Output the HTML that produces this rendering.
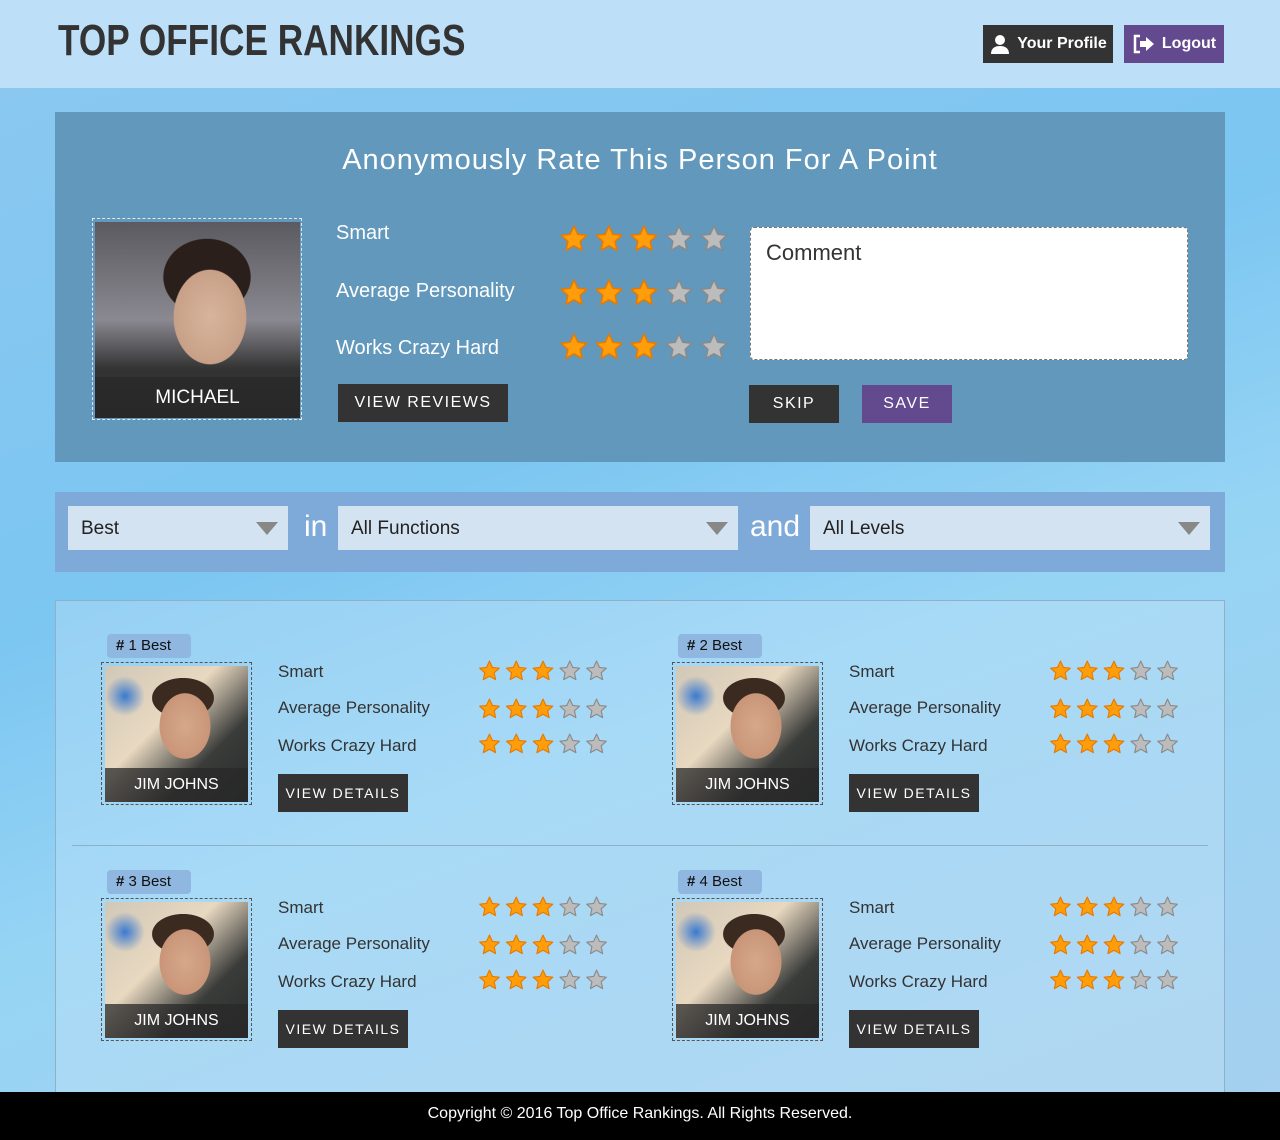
<!DOCTYPE html>
<html><head><meta charset="utf-8"><style>
*{margin:0;padding:0;box-sizing:border-box}
body{width:1280px;height:1140px;position:relative;overflow:hidden;font-family:"Liberation Sans",sans-serif;background:linear-gradient(160deg,#8cc8f0 0%,#7cc6f2 40%,#96d4f4 60%,#a6cfee 100%)}
.hdr{position:absolute;left:0;top:0;width:1280px;height:88px;background:#bde0f8}
.title{position:absolute;left:58px;top:16px;font:bold 44px "Liberation Sans Narrow","Liberation Sans",sans-serif;color:#333;white-space:nowrap;transform:scaleX(.8);transform-origin:left}
.btn{position:absolute;color:#fff;font-weight:bold;font-size:16px;display:flex;align-items:center;justify-content:center;gap:6px}
.dk{background:#333}.pu{background:#634a8e}
.abs{position:absolute}
.panel{position:absolute;left:55px;top:112px;width:1170px;height:350px;background:#6198bb}
.h2{position:absolute;left:0;width:1170px;top:32px;text-align:center;color:#fff;font-size:29px;letter-spacing:1px}
.lbl{position:absolute;color:#fff;font-size:20px;white-space:nowrap}
.sbtn{position:absolute;color:#fff;font-size:16px;letter-spacing:1.5px;display:flex;align-items:center;justify-content:center;white-space:nowrap}
.photo{position:absolute;overflow:hidden}
.name{position:absolute;left:0;bottom:0;width:100%;background:rgba(40,40,40,.75);color:#fff;text-align:center}
.filter{position:absolute;left:55px;top:492px;width:1170px;height:80px;background:#7eaad9}
.sel{position:absolute;top:14px;height:44px;background:#d4e3f1;font-size:19px;color:#222;padding:12px 0 0 13px}
.sel:after{content:"";position:absolute;right:10px;top:16px;border-left:11px solid transparent;border-right:11px solid transparent;border-top:13px solid #888}
.conj{position:absolute;top:18px;color:#fff;font-size:30px}
.list{position:absolute;left:55px;top:600px;width:1170px;height:500px;background:rgba(200,230,250,.35);border:1px solid #8fb0c8}
.badge{position:absolute;background:#8fb7e0;border-radius:4px;font-size:15px;color:#111;padding:3px 0 0 9px;height:24px;width:84px;white-space:nowrap}
.l2{position:absolute;color:#333;font-size:17px;white-space:nowrap}
.foot{position:absolute;left:0;top:1092px;width:1280px;height:48px;background:#000;color:#fff;font-size:16px;text-align:center;line-height:44px}
.dash{position:absolute;border:1px dashed rgba(255,255,255,.8)}
.pd{border:1px dashed #555}
</style></head><body>
<svg width="0" height="0" style="position:absolute"><defs>
<symbol id="so" viewBox="0 0 30 30"><path d="M15 2l3.8 8.3 9 1-6.7 6.1 1.9 8.9L15 21.8 7 26.3l1.9-8.9L2.2 11.3l9-1z" fill="#ff9d0a" stroke="#e67a00" stroke-width="1.5" stroke-linejoin="round"/></symbol>
<symbol id="sg" viewBox="0 0 30 30"><path d="M15 2l3.8 8.3 9 1-6.7 6.1 1.9 8.9L15 21.8 7 26.3l1.9-8.9L2.2 11.3l9-1z" fill="#bcbcbc" stroke="#8a8a8a" stroke-width="1.5" stroke-linejoin="round"/></symbol>
<symbol id="r" viewBox="0 0 170 30"><use href="#so" x="0" width="30" height="30"/><use href="#so" x="35" width="30" height="30"/><use href="#so" x="70" width="30" height="30"/><use href="#sg" x="105" width="30" height="30"/><use href="#sg" x="140" width="30" height="30"/></symbol>
</defs></svg>

<div class="hdr"></div>
<div class="title">TOP OFFICE RANKINGS</div>
<div class="btn dk" style="left:983px;top:25px;width:130px;height:38px"><svg width="22" height="20" viewBox="0 0 22 20"><circle cx="11" cy="6" r="5" fill="#fff"/><path d="M2 20c0-6 4-8 9-8s9 2 9 8z" fill="#fff"/></svg>Your Profile</div>
<div class="btn pu" style="left:1124px;top:25px;width:100px;height:38px"><svg width="24" height="20" viewBox="0 0 24 20"><path d="M8 2H3v16h5" fill="none" stroke="#fff" stroke-width="2.5"/><path d="M8 7h6V3l8 7-8 7v-4H8z" fill="#fff"/></svg>Logout</div>

<div class="panel">
<div class="h2">Anonymously Rate This Person For A Point</div>
<div class="photo" style="left:40px;top:110px;width:205px;height:196px;background:radial-gradient(ellipse 40px 52px at 115px 95px,#d8b49c 0,#c8a088 90%,transparent 92%),radial-gradient(ellipse 48px 42px at 112px 55px,#2a1f1a 0,#2a1f1a 90%,transparent 92%),linear-gradient(180deg,#5a5a60,#8a8890 50%,#333 75%,#2a2a2e)">
<div class="name" style="height:41px;font-size:19px;line-height:41px">MICHAEL</div></div>
<div class="dash" style="left:37px;top:106px;width:210px;height:202px"></div>
<div class="lbl" style="left:281px;top:110px">Smart</div>
<div class="lbl" style="left:281px;top:168px">Average Personality</div>
<div class="lbl" style="left:281px;top:225px">Works Crazy Hard</div>
<svg class="abs" style="left:504px;top:112px" width="170" height="30"><use href="#r"/></svg>
<svg class="abs" style="left:504px;top:166px" width="170" height="30"><use href="#r"/></svg>
<svg class="abs" style="left:504px;top:220px" width="170" height="30"><use href="#r"/></svg>
<div class="sbtn dk" style="left:283px;top:272px;width:170px;height:38px">VIEW REVIEWS</div>
<div class="abs" style="left:695px;top:115px;width:438px;height:133px;background:#fff;border:1px dashed #777;border-radius:4px;font-size:22px;color:#333;padding:12px 15px">Comment</div>
<div class="sbtn dk" style="left:694px;top:273px;width:90px;height:38px">SKIP</div>
<div class="sbtn pu" style="left:807px;top:273px;width:90px;height:38px">SAVE</div>
</div>

<div class="filter">
<div class="sel" style="left:13px;width:220px">Best</div>
<div class="conj" style="left:249px">in</div>
<div class="sel" style="left:283px;width:400px">All Functions</div>
<div class="conj" style="left:695px">and</div>
<div class="sel" style="left:755px;width:400px">All Levels</div>
</div>

<div class="list">
<div class="abs" style="left:16px;top:244px;width:1136px;height:1px;background:#8fb0c8"></div>
</div>

<div class="abs" style="left:0;top:0">
<div class="badge" style="left:107px;top:634px"><b>#</b> 1 Best</div>
<div class="photo" style="left:105px;top:666px;width:143px;height:136px;background:radial-gradient(ellipse 28px 36px at 80px 60px,#d6a88a 0,#c99578 90%,transparent 92%),radial-gradient(ellipse 34px 22px at 78px 32px,#3a2a20 0,#3a2a20 90%,transparent 92%),radial-gradient(circle at 20px 30px,#3a7ad0 0,transparent 20px),linear-gradient(135deg,#d0c8b8,#e8d8c0 40%,#3a3c3a 70%,#2a2c2c)"><div class="name" style="height:34px;font-size:16px;line-height:34px">JIM JOHNS</div></div>
<div class="abs pd" style="left:101px;top:662px;width:151px;height:143px"></div>
<div class="l2" style="left:278px;top:662px">Smart</div><div class="l2" style="left:278px;top:698px">Average Personality</div><div class="l2" style="left:278px;top:736px">Works Crazy Hard</div>
<svg class="abs" style="left:478px;top:659px" width="130" height="24" viewBox="0 0 170 30"><use href="#r"/></svg>
<svg class="abs" style="left:478px;top:697px" width="130" height="24" viewBox="0 0 170 30"><use href="#r"/></svg>
<svg class="abs" style="left:478px;top:732px" width="130" height="24" viewBox="0 0 170 30"><use href="#r"/></svg>
<div class="sbtn dk" style="left:278px;top:774px;width:130px;height:38px;font-size:14px">VIEW DETAILS</div>

<div class="badge" style="left:678px;top:634px"><b>#</b> 2 Best</div>
<div class="photo" style="left:676px;top:666px;width:143px;height:136px;background:radial-gradient(ellipse 28px 36px at 80px 60px,#d6a88a 0,#c99578 90%,transparent 92%),radial-gradient(ellipse 34px 22px at 78px 32px,#3a2a20 0,#3a2a20 90%,transparent 92%),radial-gradient(circle at 20px 30px,#3a7ad0 0,transparent 20px),linear-gradient(135deg,#d0c8b8,#e8d8c0 40%,#3a3c3a 70%,#2a2c2c)"><div class="name" style="height:34px;font-size:16px;line-height:34px">JIM JOHNS</div></div>
<div class="abs pd" style="left:672px;top:662px;width:151px;height:143px"></div>
<div class="l2" style="left:849px;top:662px">Smart</div><div class="l2" style="left:849px;top:698px">Average Personality</div><div class="l2" style="left:849px;top:736px">Works Crazy Hard</div>
<svg class="abs" style="left:1049px;top:659px" width="130" height="24" viewBox="0 0 170 30"><use href="#r"/></svg>
<svg class="abs" style="left:1049px;top:697px" width="130" height="24" viewBox="0 0 170 30"><use href="#r"/></svg>
<svg class="abs" style="left:1049px;top:732px" width="130" height="24" viewBox="0 0 170 30"><use href="#r"/></svg>
<div class="sbtn dk" style="left:849px;top:774px;width:130px;height:38px;font-size:14px">VIEW DETAILS</div>

<div class="badge" style="left:107px;top:870px"><b>#</b> 3 Best</div>
<div class="photo" style="left:105px;top:902px;width:143px;height:136px;background:radial-gradient(ellipse 28px 36px at 80px 60px,#d6a88a 0,#c99578 90%,transparent 92%),radial-gradient(ellipse 34px 22px at 78px 32px,#3a2a20 0,#3a2a20 90%,transparent 92%),radial-gradient(circle at 20px 30px,#3a7ad0 0,transparent 20px),linear-gradient(135deg,#d0c8b8,#e8d8c0 40%,#3a3c3a 70%,#2a2c2c)"><div class="name" style="height:34px;font-size:16px;line-height:34px">JIM JOHNS</div></div>
<div class="abs pd" style="left:101px;top:898px;width:151px;height:143px"></div>
<div class="l2" style="left:278px;top:898px">Smart</div><div class="l2" style="left:278px;top:934px">Average Personality</div><div class="l2" style="left:278px;top:972px">Works Crazy Hard</div>
<svg class="abs" style="left:478px;top:895px" width="130" height="24" viewBox="0 0 170 30"><use href="#r"/></svg>
<svg class="abs" style="left:478px;top:933px" width="130" height="24" viewBox="0 0 170 30"><use href="#r"/></svg>
<svg class="abs" style="left:478px;top:968px" width="130" height="24" viewBox="0 0 170 30"><use href="#r"/></svg>
<div class="sbtn dk" style="left:278px;top:1010px;width:130px;height:38px;font-size:14px">VIEW DETAILS</div>

<div class="badge" style="left:678px;top:870px"><b>#</b> 4 Best</div>
<div class="photo" style="left:676px;top:902px;width:143px;height:136px;background:radial-gradient(ellipse 28px 36px at 80px 60px,#d6a88a 0,#c99578 90%,transparent 92%),radial-gradient(ellipse 34px 22px at 78px 32px,#3a2a20 0,#3a2a20 90%,transparent 92%),radial-gradient(circle at 20px 30px,#3a7ad0 0,transparent 20px),linear-gradient(135deg,#d0c8b8,#e8d8c0 40%,#3a3c3a 70%,#2a2c2c)"><div class="name" style="height:34px;font-size:16px;line-height:34px">JIM JOHNS</div></div>
<div class="abs pd" style="left:672px;top:898px;width:151px;height:143px"></div>
<div class="l2" style="left:849px;top:898px">Smart</div><div class="l2" style="left:849px;top:934px">Average Personality</div><div class="l2" style="left:849px;top:972px">Works Crazy Hard</div>
<svg class="abs" style="left:1049px;top:895px" width="130" height="24" viewBox="0 0 170 30"><use href="#r"/></svg>
<svg class="abs" style="left:1049px;top:933px" width="130" height="24" viewBox="0 0 170 30"><use href="#r"/></svg>
<svg class="abs" style="left:1049px;top:968px" width="130" height="24" viewBox="0 0 170 30"><use href="#r"/></svg>
<div class="sbtn dk" style="left:849px;top:1010px;width:130px;height:38px;font-size:14px">VIEW DETAILS</div>
</div>

<div class="foot">Copyright © 2016 Top Office Rankings. All Rights Reserved.</div>
</body></html>
